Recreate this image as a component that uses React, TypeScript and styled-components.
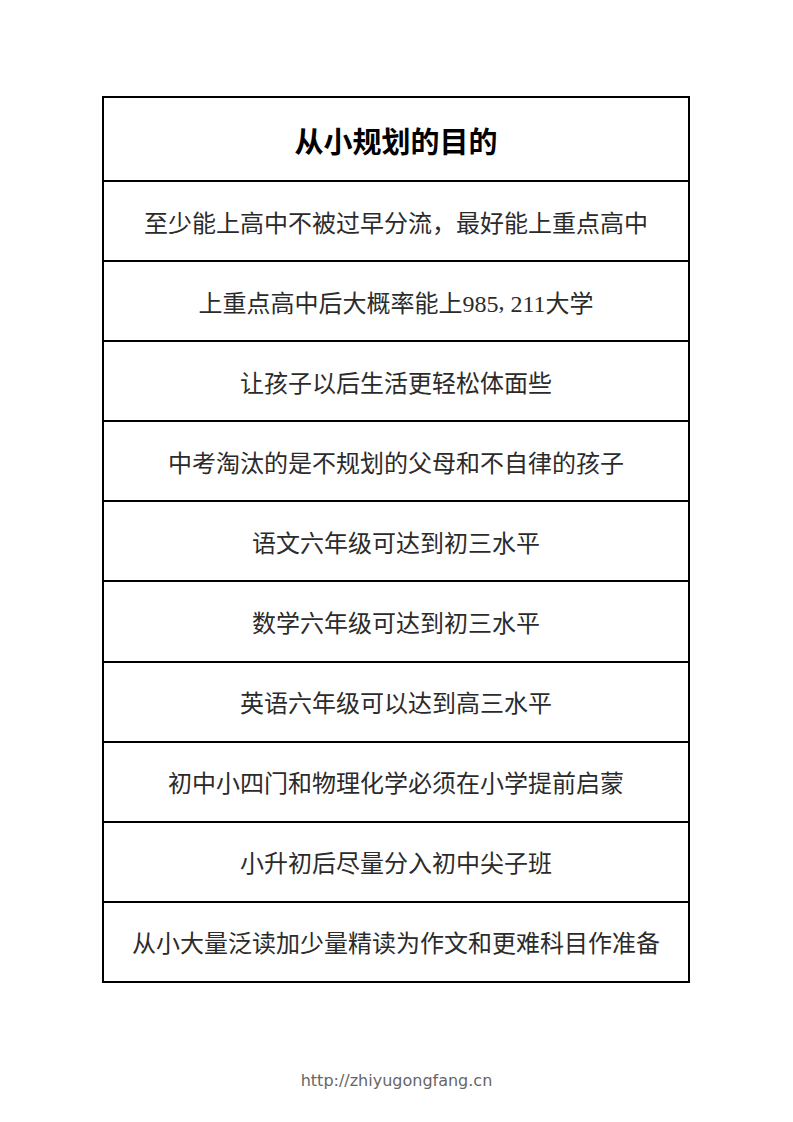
import styled, { createGlobalStyle } from 'styled-components'

const GlobalStyle = createGlobalStyle`
  html, body {
    margin: 0;
    padding: 0;
    background: #ffffff;
  }
`

const Page = styled('div')`
  width: 793px;
  height: 1122px;
  box-sizing: border-box;
  padding-top: 96px;
  display: flex;
  flex-direction: column;
  align-items: center;
  font-family: 'Liberation Serif', 'Noto Sans CJK SC', serif;
`

const Table = styled('div')`
  width: 588px;
  margin-right: 1px;
  box-sizing: border-box;
  border: 2px solid #000;
  display: flex;
  flex-direction: column;
`

const HeaderCell = styled('div')`
  height: 82px;
  display: flex;
  align-items: center;
  justify-content: center;
  font-size: 29px;
  font-weight: 700;
  color: #000;
  padding-top: 2px;
  box-sizing: border-box;
`

const Cell = styled('div')`
  height: 80.1px;
  box-sizing: border-box;
  border-top: 2px solid #000;
  display: flex;
  align-items: center;
  justify-content: center;
  font-size: 24px;
  color: #2b2b2b;
  white-space: nowrap;
`

// the comma between the numbers sits in a half-width slot in the original
const Comma = styled('span')`
  display: inline-block;
  width: 12px;
`

const Footer = styled('div')`
  margin-top: 88px;
  font-family: 'DejaVu Sans', sans-serif;
  font-size: 16px;
  color: #666;
`

const rows = [
  '至少能上高中不被过早分流，最好能上重点高中',
  '上重点高中后大概率能上985,211大学',
  '让孩子以后生活更轻松体面些',
  '中考淘汰的是不规划的父母和不自律的孩子',
  '语文六年级可达到初三水平',
  '数学六年级可达到初三水平',
  '英语六年级可以达到高三水平',
  '初中小四门和物理化学必须在小学提前启蒙',
  '小升初后尽量分入初中尖子班',
  '从小大量泛读加少量精读为作文和更难科目作准备',
]

function renderText(text: string) {
  if (!text.includes(',')) return text
  const [before, after] = text.split(',')
  return (
    <>
      {before}
      <Comma>,</Comma>
      {after}
    </>
  )
}

function App() {
  return (
    <>
      <GlobalStyle />
      <Page>
        <Table>
          <HeaderCell>从小规划的目的</HeaderCell>
          {rows.map((text) => (
            <Cell key={text}>{renderText(text)}</Cell>
          ))}
        </Table>
        <Footer>http://zhiyugongfang.cn</Footer>
      </Page>
    </>
  )
}

export default App
